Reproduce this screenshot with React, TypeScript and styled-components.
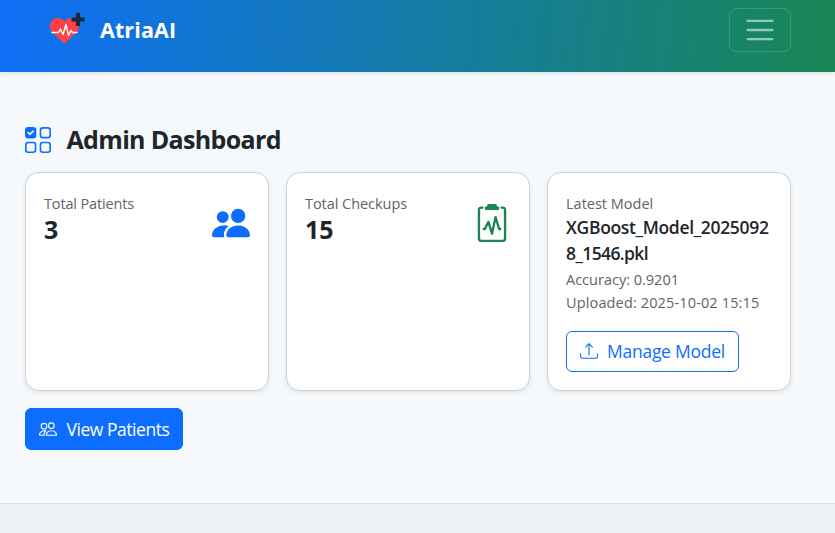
import React from "react";
import styled, { createGlobalStyle } from "styled-components";
import { BsClipboard2Pulse, BsPeople, BsPeopleFill, BsUiChecksGrid, BsUpload } from "react-icons/bs";

const GlobalStyle = createGlobalStyle`
  *, *::before, *::after { box-sizing: border-box; }
  body {
    margin: 0;
    background: #f5f9fc;
    color: #212529;
    font-family: "Segoe UI", "Open Sans", "Noto Sans", sans-serif;
  }
`;

const Page = styled.div`
  display: flex;
  flex-direction: column;
  height: 533px;
  overflow: hidden;
`;

const Navbar = styled.header`
  display: flex;
  flex: none;
  align-items: flex-start;
  justify-content: space-between;
  height: 72px;
  padding: 8px 44px 0 49px;
  background: linear-gradient(97deg, #0f6ff8, #198754);
  box-shadow: 0 2px 5px rgba(0, 0, 0, 0.09);
`;

const Brand = styled.a`
  display: flex;
  align-items: center;
  gap: 15px;
  height: 42px;
  color: #fff;
  font-size: 21.5px;
  font-weight: 700;
  letter-spacing: 0.1px;
`;

const Logo = styled.svg`
  width: 36px;
  height: 36px;
`;

const Toggler = styled.button`
  display: flex;
  align-items: center;
  justify-content: center;
  width: 62px;
  height: 44px;
  padding: 0;
  border: 1px solid rgba(255, 255, 255, 0.15);
  border-radius: 7px;
  background: transparent;
`;

const Bars = styled.svg`
  width: 34px;
  height: 34px;
  margin-top: -1px;
  stroke: rgba(255, 255, 255, 0.55);
`;

const Main = styled.main`
  display: flex;
  flex: 1;
  flex-direction: column;
  align-items: flex-start;
  padding: 52px 44px 0 25px;
`;

const Title = styled.h1`
  display: flex;
  align-items: center;
  gap: 15.5px;
  height: 32px;
  margin: 0 0 16px;
  font-size: 25px;
  font-weight: 700;
  line-height: 32px;
  letter-spacing: -0.66px;

  svg {
    width: 26px;
    height: 26px;
    color: #0d6efd;
  }
`;

const TitleText = styled.span`
  margin-top: -2px;
`;

const Cards = styled.section`
  display: grid;
  grid-template-columns: repeat(3, 244px);
  grid-template-rows: 219px;
  gap: 17px;
`;

const Card = styled.article`
  display: flex;
  align-items: flex-start;
  justify-content: space-between;
  padding: 19px 18px;
  border: 1px solid #cfd2d5;
  border-radius: 14px;
  background: #fff;
  box-shadow: 0 2px 5px rgba(0, 0, 0, 0.08);
`;

const CardBody = styled.div`
  min-width: 0;
`;

const CardIcon = styled.span<{ $color: string }>`
  display: flex;
  margin-top: 12px;
  color: ${(p) => p.$color};

  svg {
    width: 38px;
    height: 38px;
  }
`;

const Caption = styled.div<{ $track?: number }>`
  font-size: 14.5px;
  line-height: 23px;
  letter-spacing: ${(p) => p.$track ?? 0}px;
  color: #5f6469;
  white-space: nowrap;
`;

const Count = styled.div`
  font-size: 25px;
  font-weight: 700;
  line-height: 29px;
`;

const ModelName = styled.div`
  margin: -1px 0 2px;
  font-size: 17.5px;
  font-weight: 600;
  line-height: 26px;
  letter-spacing: -0.33px;
  word-break: break-all;
`;

const Tight = styled.span`
  letter-spacing: -0.6px;
`;

const Button = styled.button<{ $outline?: boolean }>`
  display: inline-flex;
  align-items: center;
  gap: ${(p) => (p.$outline ? 9 : 9.5)}px;
  height: ${(p) => (p.$outline ? 41 : 42)}px;
  width: ${(p) => (p.$outline ? 173 : 158)}px;
  padding: ${(p) => (p.$outline ? "0 13px 2px" : "0 13px")};
  border: 1px solid #0d6efd;
  border-radius: 6px;
  background: ${(p) => (p.$outline ? "transparent" : "#0d6efd")};
  color: ${(p) => (p.$outline ? "#0d6efd" : "#fff")};
  font: 400 17.5px "Segoe UI", "Open Sans", "Noto Sans", sans-serif;
  letter-spacing: ${(p) => (p.$outline ? -0.26 : -0.46)}px;
  white-space: nowrap;

  svg {
    flex: none;
    width: 18px;
    height: 18px;
  }
`;

const ManageButton = styled(Button)`
  margin-top: 17px;
`;

const ViewButton = styled(Button)`
  margin-top: 17px;
`;

const Footer = styled.footer`
  flex: none;
  height: 30px;
  border-top: 1px solid #d9dfe5;
  background: #eef2f7;
`;

export default function App() {
  return (
    <Page>
      <GlobalStyle />
      <Navbar>
        <Brand>
          <Logo viewBox="0 0 36 36">
            <path
              d="M15.500 33 3.500 21.500C-.5 17.200.3 10.500 4.800 8c4-2 8-.7 10.700 2.500C18.200 7.300 22.500 6 26.200 8c4.500 2.500 5.300 9.200 1.300 13.500Z"
              fill="#ff4146"
            />
            <path
              d="M2.500 21.500h7l2-3.500 2.500 5.500 3-10 2.500 11 2.500-5 1.500 2h5"
              fill="none"
              stroke="#fff"
              strokeWidth="1.4"
              strokeLinejoin="round"
            />
            <path d="M27 2h4v4.500h4.500v4H31V15h-4v-4.500h-4.500v-4H27Z" fill="#17263c" />
          </Logo>
          AtriaAI
        </Brand>
        <Toggler aria-label="Toggle navigation">
          <Bars viewBox="0 0 30 30">
            <path d="M4 7h22M4 15h22M4 23h22" strokeWidth="2" strokeLinecap="round" />
          </Bars>
        </Toggler>
      </Navbar>
      <Main>
        <Title>
          <BsUiChecksGrid />
          <TitleText>Admin Dashboard</TitleText>
        </Title>
        <Cards>
          <Card>
            <CardBody>
              <Caption $track={-0.15}>Total Patients</Caption>
              <Count>3</Count>
            </CardBody>
            <CardIcon $color="#0d6efd">
              <BsPeopleFill />
            </CardIcon>
          </Card>
          <Card>
            <CardBody>
              <Caption $track={-0.05}>Total Checkups</Caption>
              <Count>15</Count>
            </CardBody>
            <CardIcon $color="#198754">
              <BsClipboard2Pulse />
            </CardIcon>
          </Card>
          <Card>
            <CardBody>
              <Caption>Latest Model</Caption>
              <ModelName>
                XGBoost_Model_2025092<Tight>8_1546.pkl</Tight>
              </ModelName>
              <Caption>Accuracy: 0.9201</Caption>
              <Caption $track={0.14}>Uploaded: 2025-10-02 15:15</Caption>
              <ManageButton $outline>
                <BsUpload />
                Manage Model
              </ManageButton>
            </CardBody>
          </Card>
        </Cards>
        <ViewButton>
          <BsPeople />
          View Patients
        </ViewButton>
      </Main>
      <Footer />
    </Page>
  );
}
